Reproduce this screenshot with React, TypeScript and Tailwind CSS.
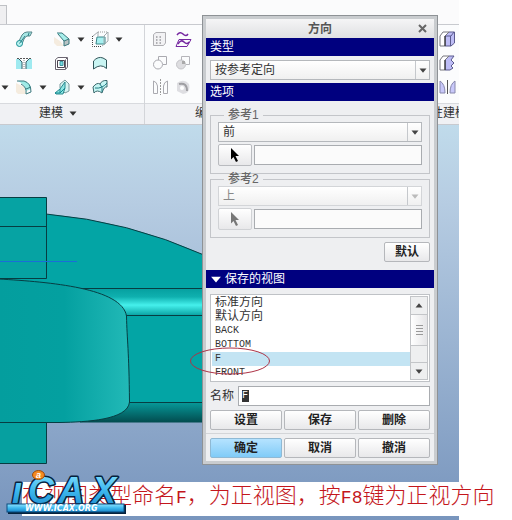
import type { ReactNode } from "react";

const views = ["标准方向", "默认方向", "BACK", "BOTTOM", "F", "FRONT"];

function Caret({ className = "" }: { className?: string }) {
  return (
    <svg width="8" height="5" viewBox="0 0 8 5" className={className}>
      <path d="M0.5 0.5H7.5L4 4.7Z" fill="currentColor" />
    </svg>
  );
}

function Icon({ children }: { children: ReactNode }) {
  return (
    <svg width="17" height="17" viewBox="0 0 17 17" fill="none" strokeWidth="1" className="shrink-0">
      {children}
    </svg>
  );
}

function Tool({ label, caret, children }: { label: string; caret?: boolean; children: ReactNode }) {
  return (
    <button aria-label={label} className="flex w-[38px] items-center gap-[6px] text-[#333]">
      <Icon>{children}</Icon>
      {caret && <Caret />}
    </button>
  );
}

function ModelTools() {
  return (
    <div className="grid grid-cols-[16px_38px_38px_38px] grid-rows-[24px_24px_24px] pt-[2px] pb-1">
      <span />
      <Tool label="扫描">
        <path d="M3 10L6 4Q8 1 11 1H16L14 5H11Q9 6 8 8L6 13Z" fill="#a7e6e4" stroke="#57868a" />
        <circle cx="3.5" cy="12.5" r="3" fill="#b9f2f0" stroke="#168d93" />
        <path d="M3.5 12.5L9 5M13 2L12 5" stroke="#2f8288" />
      </Tool>
      <Tool label="倒圆角" caret>
        <path d="M0 6L6 10L10 15H3L0 12Z" fill="#f5ecdf" />
        <path d="M3 2H8L15 8L10 10L5 4Z" fill="#a7efeb" />
        <path d="M10 10L15 8V13L10 15Z" fill="#b9c3c4" />
        <path d="M3 2H8L15 8V13L10 15V10L4 3M10 10L15 8" stroke="#39777c" />
      </Tool>
      <Tool label="拔模" caret>
        <path d="M5 6H13V13H4Z" fill="#a7f0f0" stroke="#3a8488" />
        <path d="M0.500 5V15.500H10" stroke="#444" strokeDasharray="1 1" />
        <path d="M1 5L6 1V5M10 15L16 10V1L12 5V12" stroke="#a3abae" />
        <path d="M6 1H15" stroke="#999" strokeDasharray="1 1" />
      </Tool>

      <span />
      <Tool label="孔">
        <path d="M0 4H3L6 7V14H0ZM16 4H13L10 7V14H16Z" fill="#9feaf0" />
        <path d="M1 3.500H15" stroke="#555" strokeDasharray="2 1" />
        <path d="M3 4L6 7V14M13 4L10 7V14" stroke="#345d66" />
        <path d="M8 5V14" stroke="#888" strokeDasharray="1 1" />
      </Tool>
      <Tool label="壳">
        <path d="M1.500 4.500L4 2.500H13.500V12L11.500 14.500H1.500Z" fill="#fff" stroke="#6b6571" />
        <path d="M3.500 5.500H10.500V12.500H3.500Z" fill="#fff" stroke="#4b4551" />
        <path d="M6 6.500H9V10.500H6Z" fill="#72dbe2" stroke="#42969f" />
        <path d="M11.500 5V14M11.500 4.500L13 3" stroke="#6b6571" />
      </Tool>
      <Tool label="填充">
        <path d="M1.500 6Q6 1 11 3L14.500 5V13.500Q9 8 1.500 14Z" fill="#c9f5f3" stroke="#31565a" />
      </Tool>

      <span className="flex items-center text-[#333]">
        <Caret className="ml-px" />
      </span>
      <Tool label="倒角" caret>
        <path d="M0 4L8 8L10 15H2L0 13Z" fill="#f5ecdf" />
        <path d="M2 2H8Q15 4 15 10L10 12Q10 6 2 2Z" fill="#9eebe7" />
        <path d="M1 2H8Q15 4 15 13L10 15Q11 8 5 5" stroke="#39777c" />
        <path d="M10 10L15 8" stroke="#39777c" />
      </Tool>
      <Tool label="筋" caret>
        <path d="M6 5L11 1L15 5V12L11 14L6 9Z" fill="#d5f4f2" stroke="#7a9a9d" />
        <path d="M1 14L6 10L11 3V9L9 15H2Z" fill="#8ee6e4" stroke="#2a898e" />
        <path d="M1 14H6L11 9M6 10V14" stroke="#168d93" />
      </Tool>
      <Tool label="边界混合">
        <path d="M1 8Q5 3 8 5Q10 1 15 1.500V8Q12 7 10 14Q5 10 2 14Z" fill="#c5f5f3" stroke="#39676b" />
        <path d="M8 5Q11 8 10 13M3 9Q10 10 15 4" stroke="#237d84" />
      </Tool>
    </div>
  );
}

function EditTools() {
  return (
    <div className="grid grid-cols-[23px_23px_23px] grid-rows-[24px_24px_24px] items-center pt-[2px] pb-1 pl-[7px]">
      <button aria-label="阵列">
        <Icon>
          <path d="M1.500 3.500L4 1.500H13.500V12L11.500 14.500H1.500Z" fill="#f2f2f4" stroke="#afafb3" />
          <path d="M4 6H11M4 9H11M4 12H11" stroke="#9a9a9e" strokeWidth="1.500" strokeDasharray="1.500 2" />
        </Icon>
      </button>
      <button aria-label="投影">
        <Icon>
          <path d="M2 4Q5 0 8 3T13 3" stroke="#7527a0" strokeWidth="1.500" />
          <path d="M4 8.500H16L12 15.500H1Z" stroke="#7527a0" />
          <path d="M3 13Q6 8 9 11T14 11" stroke="#7527a0" strokeWidth="1.500" />
        </Icon>
      </button>
      <span />
      <button aria-label="合并">
        <Icon>
          <path d="M6.500 5V1.500H14.500V9.500H11" stroke="#aaaab0" />
          <circle cx="6" cy="9.500" r="4.500" stroke="#aaaab0" />
        </Icon>
      </button>
      <button aria-label="相交">
        <Icon>
          <circle cx="6" cy="9.500" r="4.500" fill="#dddde0" stroke="#c4c4c8" />
          <path d="M6.500 5V1.500H14.500V9.500H11" stroke="#b5b5ba" />
          <path d="M7 6H10V9H7Z" fill="#aaa" />
        </Icon>
      </button>
      <span />
      <button aria-label="镜像">
        <Icon>
          <path d="M1.500 14.500V2Q5 3 5.500 7V14.500ZM15.500 14.500V2Q12 3 11.500 7V14.500Z" stroke="#aaaab0" />
          <path d="M8.500 0V16" stroke="#999" strokeDasharray="2 1" />
        </Icon>
      </button>
      <button aria-label="加厚">
        <Icon>
          <path d="M2 4Q9 -1 14 5Q16 14 8 15L2 12Z" fill="#dedee2" />
          <path d="M4 5Q12 3 12 12" stroke="#9f9fa3" strokeWidth="2" />
          <circle cx="7" cy="9" r="2" fill="#fff" />
        </Icon>
      </button>
      <span />
    </div>
  );
}

function FlexTools() {
  return (
    <div className="grid grid-rows-[24px_24px_24px] items-center pt-[2px] pb-1 pl-2">
      <button aria-label="移动">
        <Icon>
          <path d="M6 5L10 1H15.500V12L12 15H6Z" fill="#bdbcf5" stroke="#5a5a8e" />
          <path d="M1 5L4 1H10L6 5V15H1Z" fill="#fff" stroke="#77777e" />
          <path d="M6 5H12L15 1M11.500 5V15" stroke="#5a5a8e" />
          <path d="M6 5V15" stroke="#222" />
        </Icon>
      </button>
      <button aria-label="偏移">
        <Icon>
          <path d="M6 5L10 1H15L12 5L15 8L12 11L14 13L11 15H6Z" fill="#bdbcf5" stroke="#5a5a8e" />
          <path d="M1 5L4 1H10L6 5V15H1Z" fill="#fff" stroke="#77777e" />
          <path d="M6 5V15" stroke="#222" />
        </Icon>
      </button>
      <button aria-label="对称">
        <Icon>
          <path d="M1 2Q6 5 6 14H1ZM16 2Q11 5 11 14H16Z" fill="#c8c8fa" stroke="#8888ac" />
          <path d="M8.500 1V15" stroke="#555" />
        </Icon>
      </button>
    </div>
  );
}

function Model() {
  return (
    <svg
      viewBox="0 125 459 395"
      preserveAspectRatio="xMinYMin slice"
      className="block h-[395px] w-full"
      stroke="#073d42"
      strokeWidth="1"
    >
      <defs>
        <linearGradient id="sky" x1="0" y1="0" x2="0" y2="1">
          <stop offset="0" stopColor="#c0dbeb" />
          <stop offset="0.2" stopColor="#b6cce2" />
          <stop offset="1" stopColor="#7895bd" />
        </linearGradient>
        <linearGradient id="round" x1="0" y1="0" x2="1" y2="0">
          <stop offset="0" stopColor="#049e9e" />
          <stop offset="0.5" stopColor="#04a0a0" />
          <stop offset="1" stopColor="#22b9b7" />
        </linearGradient>
        <linearGradient id="shine" x1="0" y1="0" x2="0" y2="1">
          <stop offset="0" stopColor="#06a0a0" />
          <stop offset="0.3" stopColor="#0fb0af" />
          <stop offset="0.62" stopColor="#45f0ec" />
          <stop offset="1" stopColor="#0ba5a5" />
        </linearGradient>
        <linearGradient id="shade" x1="0" y1="0" x2="0" y2="1">
          <stop offset="0" stopColor="#079b9b" />
          <stop offset="1" stopColor="#024b4e" />
        </linearGradient>
      </defs>
      <rect y="125" width="459" height="395" fill="url(#sky)" stroke="none" />
      <path d="M46 214Q128 221 204 255V422H0V278H46Z" fill="#03a5a5" stroke="none" />
      <path d="M46 214Q128 221 204 255" fill="none" />
      <rect x="82" y="289" width="122" height="26" fill="url(#shine)" stroke="none" />
      <rect x="80" y="402" width="124" height="20.500" fill="url(#shade)" stroke="none" />
      <path d="M80 288.500H204M126 315.500H204M129 402.500H204" />
      <path d="M-1 197.500H46.500V278.500H-1Z" fill="#06a3a3" />
      <path d="M0 226.500H46" />
      <path
        d="M-1 279C50 282 122 288 126.500 316C127 340 129 350 129.500 402C128 420 86 422 60 422.500H-1Z"
        fill="url(#round)"
      />
      <path d="M-1 422.500H46.500V463.500H-1Z" fill="#06a0a0" />
      <rect y="261" width="77" height="1" fill="#1a6ed8" stroke="none" />
    </svg>
  );
}

function Heading({ children }: { children: ReactNode }) {
  return <h2 className="flex h-[18px] items-center bg-[#00007f] px-1 text-white">{children}</h2>;
}

function Picker({ label, value, disabled }: { label: string; value: string; disabled?: boolean }) {
  return (
    <div className="relative">
      <select
        aria-label={label}
        disabled={disabled}
        className="block h-5 w-full appearance-none border border-[#b5b8bc] bg-linear-to-b from-white to-[#f0f0f0] px-1 text-[#333] disabled:border-[#d3d5d8] disabled:text-[#888] disabled:opacity-100"
      >
        <option>{value}</option>
      </select>
      <span
        className={`pointer-events-none absolute inset-y-px right-px flex w-[14px] items-center justify-center border-l border-[#c5c8cc] ${disabled ? "text-[#bbb]" : "text-[#444]"}`}
      >
        <Caret />
      </span>
    </div>
  );
}

function Reference({ title, value, disabled }: { title: string; value: string; disabled?: boolean }) {
  return (
    <fieldset className="border border-[#c3c5c9] px-[7px] pt-[2px] pb-[7px]">
      <legend className="ml-[6px] px-1 font-medium leading-[10px] text-[#666]">{title}</legend>
      <Picker label={title} value={value} disabled={disabled} />
      <div className="mt-[2px] flex items-center gap-[2px]">
        <button
          aria-label={`选择${title}`}
          disabled={disabled}
          className="flex h-[22px] w-[34px] items-center justify-center rounded-xs border border-[#b9bbbf] bg-linear-to-b from-white to-[#e8e8ea] text-black disabled:border-[#d0d2d5] disabled:text-[#777]"
        >
          <svg width="10" height="15" viewBox="0 0 10 15">
            <path d="M1 0L9 8H5.500L8 13L6 14L3.500 9L1 11.500Z" fill="currentColor" />
          </svg>
        </button>
        <input
          aria-label={`${title}对象`}
          disabled={disabled}
          className="h-5 min-w-0 flex-1 border border-[#a9acb0] bg-[#fbfbfb]"
        />
      </div>
    </fieldset>
  );
}

function Button({ primary, children }: { primary?: boolean; children: ReactNode }) {
  return (
    <button
      className={`h-5 rounded-xs border px-2 font-bold leading-none text-[#222] ${
        primary
          ? "border-[#8fb9d4] bg-linear-to-b from-[#b5e3ff] to-[#80cbf7]"
          : "border-[#b5b7bb] bg-linear-to-b from-white to-[#e8e8ea]"
      }`}
    >
      {children}
    </button>
  );
}

function Dialog() {
  return (
    <section className="absolute top-[15px] left-[202px] w-[236px] border border-[#8e9296] bg-[#c9cccf] p-[3px] text-xs leading-[14px] text-[#333]">
      <div className="bg-[#eeeff1] pb-[3px]">
        <header className="relative flex h-[19px] items-center justify-center bg-linear-to-b from-[#f5f5f6] to-[#dfe0e2]">
          <h1 className="font-bold text-[#555]">方向</h1>
          <button aria-label="关闭" className="absolute right-[7px] text-[#666]">
            <svg width="9" height="9" viewBox="0 0 9 9">
              <path d="M1 1L8 8M8 1L1 8" stroke="currentColor" strokeWidth="2" />
            </svg>
          </button>
        </header>
        <Heading>类型</Heading>
        <div className="px-1 pt-1 pb-[3px]">
          <Picker label="类型" value="按参考定向" />
        </div>
        <Heading>选项</Heading>
        <div className="px-1 pt-[9px] pb-2">
          <Reference title="参考1" value="前" />
          <Reference title="参考2" value="上" disabled />
          <div className="mt-1 flex justify-end">
            <Button>
              <span className="px-[2px]">默认</span>
            </Button>
          </div>
        </div>
        <Heading>
          <Caret className="mr-[3px] h-[7px] w-3" />
          保存的视图
        </Heading>
        <div className="px-1 pt-[6px]">
          <div className="flex h-[88px] border border-[#bfc2c6] bg-white p-px">
            <ul className="min-w-0 flex-1 overflow-hidden">
              {views.map((view) => (
                <li
                  key={view}
                  className={`h-[14px] px-[3px] ${view === "F" ? "bg-[#c3e4f3]" : ""} ${/^[A-Z]/.test(view) ? "text-[10px]" : ""} font-['Liberation_Mono','Noto_Sans_CJK_SC',monospace]`}
                >
                  {view}
                </li>
              ))}
            </ul>
            <div className="flex w-[18px] flex-col border border-[#c3c5c8] bg-[#eeeff0] text-[#444]">
              <button aria-label="向上" className="flex h-[17px] items-center justify-center">
                <Caret className="rotate-180" />
              </button>
              <span className="flex h-8 flex-col items-center justify-center gap-[2px] border-y border-[#c3c5c8] bg-linear-to-r from-white to-[#e5e5e7]">
                <i className="h-px w-[7px] bg-[#999]" />
                <i className="h-px w-[7px] bg-[#999]" />
                <i className="h-px w-[7px] bg-[#999]" />
                <i className="h-px w-[7px] bg-[#999]" />
              </span>
              <span className="flex-1" />
              <button aria-label="向下" className="flex h-[17px] items-center justify-center border-t border-[#c3c5c8]">
                <Caret />
              </button>
            </div>
          </div>
          <div className="mt-1 flex items-center gap-1">
            <label htmlFor="view-name">名称</label>
            <div className="flex h-5 min-w-0 flex-1 items-center border border-[#a9acb0] bg-white px-[3px]">
              <input
                id="view-name"
                defaultValue="F"
                className="h-3 w-[7px] bg-[#333] font-['Liberation_Mono',monospace] text-[10px] leading-3 text-white outline-none"
              />
            </div>
          </div>
          <div className="mt-1 grid grid-cols-3 gap-[2px]">
            <Button>设置</Button>
            <Button>保存</Button>
            <Button>删除</Button>
          </div>
        </div>
        <div className="mt-[3px] grid grid-cols-3 gap-[2px] border-t border-[#d3d5d8] px-1 pt-1">
          <Button primary>确定</Button>
          <Button>取消</Button>
          <Button>撤消</Button>
        </div>
      </div>
    </section>
  );
}

function Logo() {
  return (
    <svg width="124" height="52" viewBox="4 466 124 52" className="absolute top-[466px] left-1">
      <defs>
        <linearGradient id="ink" x1="0" y1="0" x2="0" y2="1">
          <stop offset="0" stopColor="#8ee4ff" />
          <stop offset="0.5" stopColor="#3db8ee" />
          <stop offset="1" stopColor="#1a86c9" />
        </linearGradient>
      </defs>
      <rect x="8" y="505" width="118" height="9" fill="#06223d" />
      <g
        fontFamily="Liberation Sans"
        fontSize="36"
        fontWeight="bold"
        fontStyle="italic"
        fill="url(#ink)"
        stroke="#06223d"
        strokeWidth="3"
        strokeLinejoin="round"
        paintOrder="stroke"
      >
        <text y="503">
          <tspan x="12">ı</tspan>
          <tspan x="28">C</tspan>
          <tspan x="58">A</tspan>
          <tspan x="92">X</tspan>
        </text>
      </g>
      <rect x="7" y="504" width="117" height="8" fill="url(#ink)" stroke="#0b4c80" />
      <text x="25" y="511" fontFamily="DejaVu Sans" fontSize="8" fontWeight="bold" fontStyle="italic" fill="#fff">
        WWW.ICAX.ORG
      </text>
      <ellipse cx="38.500" cy="475" rx="6" ry="4.500" fill="#f58a1f" stroke="#9c4a08" />
      <text x="36" y="478" fontFamily="Liberation Sans" fontSize="9" fontWeight="bold" fontStyle="italic" fill="#fff">
        a
      </text>
    </svg>
  );
}

export default function App() {
  return (
    <main className="relative overflow-hidden bg-white font-['Liberation_Sans','Noto_Sans_CJK_SC',sans-serif]">
      <div className="mr-[53px]">
        <div className="flex h-6 items-end bg-[#fbfbfc]">
          <div className="h-[19px] w-[7px] border-t border-r border-[#bfc1c5] bg-[#efeff1]" />
        </div>
        <div className="flex border-y border-[#c8cacf] bg-[#fbfcfd] text-xs text-[#333]">
          <div className="w-[145px] border-r border-[#d3d5d9]">
            <ModelTools />
            <div className="flex h-[21px] items-center gap-[6px] border-t border-[#d8dade] bg-[#f0f1f4] pb-[2px] pl-[39px]">
              建模
              <Caret />
            </div>
          </div>
          <div className="flex-1">
            <EditTools />
            <div className="flex h-[21px] items-center border-t border-[#d8dade] bg-[#f0f1f4] pb-[2px] pl-[50px]">
              编辑
            </div>
          </div>
          <div className="w-7 overflow-hidden">
            <FlexTools />
            <div className="flex h-[21px] items-center border-t border-[#d8dade] bg-[#f0f1f4] pb-[2px] whitespace-nowrap">
              性建模
            </div>
          </div>
        </div>
        <Model />
      </div>
      <Dialog />
      <svg width="82" height="30" className="pointer-events-none absolute top-[346px] left-[189px]">
        <ellipse cx="41" cy="15" rx="39.500" ry="13" fill="none" stroke="#ad3346" />
      </svg>
      <p className="absolute top-[482px] right-0 left-[22px] h-[34px] bg-white font-['Noto_Sans_CJK_SC',sans-serif] text-[22px] leading-[22px] font-light whitespace-nowrap text-[#c4161c]">
        在视图类型命名<span className="font-['Liberation_Mono',monospace] text-[18px] font-normal">F</span>，为正视图，按
        <span className="font-['Liberation_Mono',monospace] text-[18px] font-normal">F8</span>键为正视方向
      </p>
      <Logo />
    </main>
  );
}
